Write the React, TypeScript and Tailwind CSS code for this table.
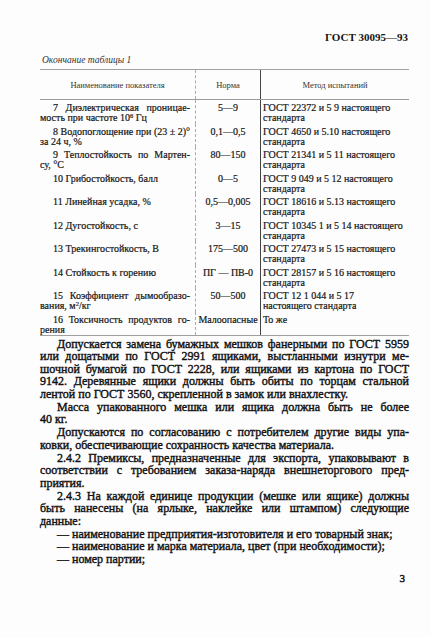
const rows = [
  {
    n: ["7 Диэлектрическая проницае-", <>мость при частоте 10<sup className="text-[6.5px]">6</sup> Гц</>],
    v: "5—9",
    m: ["ГОСТ 22372 и 5 9 настоящего", "стандарта"],
  },
  { n: ["8 Водопоглощение при (23 ± 2)°", "за 24 ч, %"], v: "0,1—0,5", m: ["ГОСТ 4650 и 5.10 настоящего", "стандарта"] },
  { n: ["9 Теплостойкость по Мартен-", "су, °С"], v: "80—150", m: ["ГОСТ 21341 и 5 11 настоящего", "стандарта"] },
  { n: ["10 Грибостойкость, балл"], v: "0—5", m: ["ГОСТ 9 049 и 5 12 настоящего", "стандарта"] },
  { n: ["11 Линейная усадка, %"], v: "0,5—0,005", m: ["ГОСТ 18616 и 5.13 настоящего", "стандарта"] },
  { n: ["12 Дугостойкость, с"], v: "3—15", m: ["ГОСТ 10345 1 и 5 14 настоящего", "стандарта"] },
  { n: ["13 Трекингостойкость, В"], v: "175—500", m: ["ГОСТ 27473 и 5 15 настоящего", "стандарта"] },
  { n: ["14 Стойкость к горению"], v: "ПГ — ПВ-0", m: ["ГОСТ 28157 и 5 16 настоящего", "стандарта"] },
  {
    n: ["15 Коэффициент дымообразо-", <>вания, м<sup className="text-[6.5px]">2</sup>/кг</>],
    v: "50—500",
    m: ["ГОСТ 12 1 044 и 5 17", "настоящего стандарта"],
  },
  { n: ["16 Токсичность продуктов го-", "рения"], v: "Малоопасные", m: ["То же"] },
];

// body text, one entry per printed line; the last line of a paragraph is not stretched
const paragraphs: string[][] = [
  [
    "Допускается замена бумажных мешков фанерными по ГОСТ 5959",
    "или дощатыми по ГОСТ 2991 ящиками, выстланными изнутри ме-",
    "шочной бумагой по ГОСТ 2228, или ящиками из картона по ГОСТ",
    "9142. Деревянные ящики должны быть обиты по торцам стальной",
    "лентой по ГОСТ 3560, скрепленной в замок или внахлестку.",
  ],
  ["Масса упакованного мешка или ящика должна быть не более", "40 кг."],
  ["Допускаются по согласованию с потребителем другие виды упа-", "ковки, обеспечивающие сохранность качества материала."],
  [
    "2.4.2 Премиксы, предназначенные для экспорта, упаковывают в",
    "соответствии с требованием заказа-наряда внешнеторгового пред-",
    "приятия.",
  ],
  [
    "2.4.3 На каждой единице продукции (мешке или ящике) должны",
    "быть нанесены (на ярлыке, наклейке или штампом) следующие",
    "данные:",
  ],
];

const dashes = [
  "— наименование предприятия-изготовителя и его товарный знак;",
  "— наименование и марка материала, цвет (при необходимости);",
  "— номер партии;",
];

function Line({ text, indent, full }: { text: string; indent?: boolean; full?: boolean }) {
  return (
    <div
      className={`whitespace-nowrap ${indent ? "pl-[17px]" : ""} ${full ? "text-justify [text-align-last:justify]" : ""}`}
    >
      {text}
    </div>
  );
}

export default function App() {
  return (
    <div
      className="w-[431px] h-[638px] bg-[#fdfdfd] text-[#151515] pl-[40px] pr-[22px] pt-[31px] flex flex-col overflow-hidden"
      style={{ fontFamily: '"Liberation Serif", "Times New Roman", serif' }}
    >
      <div className="text-right font-bold text-[11px] leading-[12px] pr-[1px]">ГОСТ 30095—93</div>

      <div className="mt-[12px] italic text-[9.5px] leading-[10px] pl-[2px] text-[#333]">
        Окончание таблицы 1
      </div>

      {/* table */}
      <div className="mt-[4px] border-t border-b border-[#a0a0a0] text-[10px] leading-[10px] [-webkit-text-stroke:0.2px]">
        <div className="grid grid-cols-[156px_65px_1fr] h-[30px] border-b border-[#9a9a9a] text-[8.5px] text-[#333] [-webkit-text-stroke:0px]">
          <div className="flex items-center justify-center border-r border-dashed border-[#aaa]">
            Наименование показателя
          </div>
          <div className="flex items-center justify-center border-r border-[#444]">Норма</div>
          <div className="flex items-center justify-center">Метод испытаний</div>
        </div>
        {rows.map((r, i) => (
          <div key={i} className="grid grid-cols-[156px_65px_1fr] h-[23.5px]">
            <div className="pt-[3px] pr-[5px] border-r border-dashed border-[#aaa] whitespace-nowrap">
              <div className={`pl-[13px] ${r.n.length > 1 ? "text-justify [text-align-last:justify]" : ""}`}>
                {r.n[0]}
              </div>
              {r.n[1] && <div>{r.n[1]}</div>}
            </div>
            <div className="pt-[3px] text-center border-r border-[#444] whitespace-nowrap">{r.v}</div>
            <div className="pt-[3px] pl-[2px] whitespace-nowrap">
              {r.m.map((t, j) => (
                <div key={j}>{t}</div>
              ))}
            </div>
          </div>
        ))}
      </div>

      {/* body */}
      <div className="mt-[2px] text-[12px] leading-[12.4px] text-[#111] [-webkit-text-stroke:0.4px]">
        {paragraphs.map((p, i) => (
          <div key={i} className={i === 0 ? "" : "mt-[0.8px]"}>
            {p.map((t, j) => (
              <Line key={j} text={t} indent={j === 0} full={j < p.length - 1} />
            ))}
          </div>
        ))}
        <div className="mt-[0.8px] pl-[17px]">
          {dashes.map((t) => (
            <div key={t} className="whitespace-nowrap">
              {t}
            </div>
          ))}
        </div>
        <div className="mt-[7px] text-right pr-[4px] text-[11px] leading-[12px]">3</div>
      </div>
    </div>
  );
}
